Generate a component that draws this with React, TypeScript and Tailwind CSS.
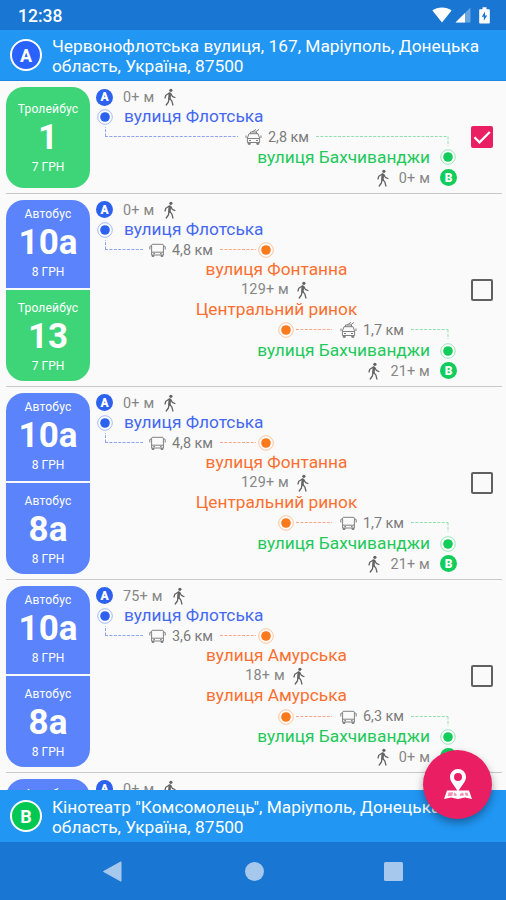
import React from 'react';
import clsx from 'clsx';

type Kind = 'bus' | 'trolley';
type Tone = 'blue' | 'orange' | 'green';

interface Leg {
  kind: Kind;
  number: string;
  price: string;
  distance: string;
}

interface Route {
  id: number;
  checked?: boolean;
  walkStart: string;
  walkEnd: string;
  from: string;
  to: string;
  transfer?: { from: string; walk: string; to: string };
  legs: Leg[];
}

const bus = (number: string, distance: string): Leg => ({ kind: 'bus', number, price: '8 ГРН', distance });
const trolley = (number: string, distance: string): Leg => ({ kind: 'trolley', number, price: '7 ГРН', distance });

const FROM = 'вулиця Флотська';
const TO = 'вулиця Бахчиванджи';

const routes: Route[] = [
  { id: 1, checked: true, walkStart: '0+ м', walkEnd: '0+ м', from: FROM, to: TO, legs: [trolley('1', '2,8 км')] },
  {
    id: 2, walkStart: '0+ м', walkEnd: '21+ м', from: FROM, to: TO,
    transfer: { from: 'вулиця Фонтанна', walk: '129+ м', to: 'Центральний ринок' },
    legs: [bus('10а', '4,8 км'), trolley('13', '1,7 км')],
  },
  {
    id: 3, walkStart: '0+ м', walkEnd: '21+ м', from: FROM, to: TO,
    transfer: { from: 'вулиця Фонтанна', walk: '129+ м', to: 'Центральний ринок' },
    legs: [bus('10а', '4,8 км'), bus('8а', '1,7 км')],
  },
  {
    id: 4, walkStart: '75+ м', walkEnd: '0+ м', from: FROM, to: TO,
    transfer: { from: 'вулиця Амурська', walk: '18+ м', to: 'вулиця Амурська' },
    legs: [bus('10а', '3,6 км'), bus('8а', '6,3 км')],
  },
  {
    id: 5, walkStart: '0+ м', walkEnd: '0+ м', from: FROM, to: TO,
    transfer: { from: 'вулиця Амурська', walk: '18+ м', to: 'вулиця Амурська' },
    legs: [bus('10а', '3,6 км'), bus('8а', '6,3 км')],
  },
];

const toneHex: Record<Tone, string> = { blue: '#2d62ee', orange: '#fb7a1c', green: '#12cc5c' };
const lineHex: Record<Tone, string> = { blue: '#8fa5f3', orange: '#fba88a', green: '#93dfb0' };

const StopDot = ({ tone }: { tone: Tone }) => (
  <svg className="w-[18px] h-[18px] shrink-0" viewBox="0 0 18 18">
    <circle cx="9" cy="9" r="7.3" fill="#fff" stroke={toneHex[tone]} strokeWidth="0.9" opacity="0.45" />
    <circle cx="9" cy="9" r="4.8" fill={toneHex[tone]} />
  </svg>
);

// Dashed connector, optionally turning up (at its start) or down (at its end)
const Dashes = ({ tone, turn, className }: { tone: Tone; turn?: 'up' | 'down'; className?: string }) => (
  <svg className={clsx('h-5 shrink-0 overflow-visible', className)} stroke={lineHex[tone]} strokeWidth="1" strokeDasharray="3 1.4">
    <line x1="0" y1="9.5" x2="100%" y2="9.5" />
    {turn === 'up' && <line x1="0.5" y1="9.5" x2="0.5" y2="0" />}
    {turn === 'down' && <line x1="100%" y1="9.5" x2="100%" y2="19" />}
  </svg>
);

const VehicleIcon = ({ kind }: { kind: Kind }) => (
  <svg className="w-[17px] h-[18px] shrink-0 -mr-px" viewBox="0 0 17 18" fill="none" stroke="#808080" strokeWidth="1">
    {kind === 'bus' ? (
      <>
        <path d="M3.2 3.3h10.6l.6 1v9.700H2.6V4.300zM2.600 11.200h11.800M.8 8.500V5.500l1.800-.8M16.200 8.500V5.500l-1.800-.8" />
        <path d="M4.300 12.600h1.700M11 12.600h1.700" />
        <path d="M3.100 14v1.500h1.800V14M12.100 14v1.500h1.800V14" fill="#808080" />
      </>
    ) : (
      <>
        <path d="M4 5.700h9l1.600 4.300v4.500H2.400V10zM2.600 10.500h11.800M1 7.500v2.500M16 7.500v2.500" />
        <path d="M5.500 5.700V4h6v1.700M7 4l4-2.600M10.500 4l3.500-2.600" />
        <path d="M4 12.500h2M11 12.500h2" />
        <path d="M3.200 14.600v1.700h2v-1.700M11.800 14.600v1.700h2v-1.700" fill="#808080" />
      </>
    )}
  </svg>
);

const Distance = ({ leg }: { leg: Leg }) => (
  <>
    <VehicleIcon kind={leg.kind} />
    <span className="ml-[7px] mr-[6px] mt-px w-[42px] text-[14.4px] text-[#7c7c7c]">{leg.distance}</span>
  </>
);

const Walk = () => (
  <svg className="w-[18px] h-[18px] shrink-0" viewBox="0 0 18 18" fill="none" stroke="#636363" strokeWidth="1.3" strokeLinecap="round" strokeLinejoin="round">
    <circle cx="9.900" cy="2.300" r="1.600" fill="#636363" stroke="none" />
    <path d="M8.800 5.500l-.4 5" strokeWidth="2.600" />
    <path d="M8 5.300L4.800 7.200 4 10M9.800 5.600l1.500 2.700 2.600 1.200" />
    <path d="M8.900 10.600l2 2.600 1 3.800M8 10.600l-.6 3.400-2.200 3" />
  </svg>
);

const Badge = ({ label }: { label: 'A' | 'B' }) => (
  <span
    className={clsx(
      'w-[17px] h-[17px] shrink-0 rounded-full flex items-center justify-center text-white text-[12px] leading-none font-black',
      label === 'A' ? 'bg-[#2d62ee]' : 'bg-[#12cc5c]'
    )}
  >
    {label}
  </span>
);

const Line = ({ className, children }: { className?: string; children: React.ReactNode }) => (
  <div className={clsx('h-[20.150px] flex items-center whitespace-nowrap', className)}>{children}</div>
);

const Stop = ({ children }: { children: React.ReactNode }) => (
  <span className="text-[17.3px]">{children}</span>
);

const Meters = ({ children }: { children: React.ReactNode }) => (
  <span className="text-[14.4px] tracking-[0.2px] text-[#868686]">{children}</span>
);

const LegCard = ({ leg }: { leg: Leg }) => (
  <div
    className={clsx(
      'flex-1 flex flex-col items-center justify-center text-white text-[12px] leading-[14px]',
      'only:pt-[2px] not-last:pb-px not-first:pt-[3px]',
      leg.kind === 'bus' ? 'bg-[#5b84fc]' : 'bg-[#3dd578]'
    )}
  >
    <span className="tracking-[0.2px]">{leg.kind === 'bus' ? 'Автобус' : 'Тролейбус'}</span>
    <span className="text-[35px] leading-[44px] font-bold">{leg.number}</span>
    <span>{leg.price}</span>
  </div>
);

const Checkbox = ({ checked }: { checked?: boolean }) => (
  <span
    className={clsx(
      'w-[22px] h-[22px] rounded-[2px] flex items-center justify-center',
      checked ? 'bg-[#e91e63]' : 'border-2 border-[#606060]'
    )}
  >
    {checked && (
      <svg className="w-[22px] h-[22px]" viewBox="0 0 22 22" fill="none" stroke="#fff" strokeWidth="2.3">
        <path d="M3.5 11.3l5 5L18.8 6" />
      </svg>
    )}
  </span>
);

const RouteRow = ({ route }: { route: Route }) => {
  const [first, second] = route.legs;
  return (
    <div className="ml-[6px] mr-[4px] pt-[6px] pb-[4.800px] flex shrink-0 border-b border-[#c8c8c8]">
      <div className="w-[84px] rounded-[18px] overflow-hidden flex flex-col gap-[2px]">
        {route.legs.map((leg, i) => (
          <LegCard key={i} leg={leg} />
        ))}
      </div>

      <div className="ml-[6px] w-[361px]">
        <Line>
          <Badge label="A" />
          <span className="ml-[10px] mr-[7px]"><Meters>{route.walkStart}</Meters></span>
          <Walk />
        </Line>
        <Line className="text-[#4468f2]">
          <StopDot tone="blue" />
          <span className="ml-[10px]"><Stop>{route.from}</Stop></span>
        </Line>
        {route.transfer && second ? (
          <>
            <Line className="pl-[9px]">
              <Dashes tone="blue" turn="up" className="w-[38px] mr-[6px]" />
              <Distance leg={first} />
              <Dashes tone="orange" className="w-[36px] mr-px" />
              <StopDot tone="orange" />
            </Line>
            <Line className="justify-center text-[#fb7030]"><Stop>{route.transfer.from}</Stop></Line>
            <Line className="justify-center gap-[5px]"><Meters>{route.transfer.walk}</Meters><Walk /></Line>
            <Line className="justify-center text-[#fb7030]"><Stop>{route.transfer.to}</Stop></Line>
            <Line className="justify-end pr-[9px]">
              <StopDot tone="orange" />
              <Dashes tone="orange" className="w-[36px] ml-px mr-[8px]" />
              <Distance leg={second} />
              <Dashes tone="green" turn="down" className="w-[37px]" />
            </Line>
          </>
        ) : (
          <Line className="px-[9px]">
            <Dashes tone="blue" turn="up" className="w-[133px] mr-[7px]" />
            <Distance leg={first} />
            <Dashes tone="green" turn="down" className="w-[132px]" />
          </Line>
        )}
        <Line className="justify-end text-[#22c95a]">
          <Stop>{route.to}</Stop>
          <span className="ml-[9px] flex"><StopDot tone="green" /></span>
        </Line>
        <Line className="justify-end">
          <Walk />
          <span className="ml-[7px] mr-[10px]"><Meters>{route.walkEnd}</Meters></span>
          <Badge label="B" />
        </Line>
      </div>

      <div className="ml-[14px] flex items-center">
        <Checkbox checked={route.checked} />
      </div>
    </div>
  );
};

const AddressBar = ({ label, lines, className }: { label: 'A' | 'B'; lines: string[]; className?: string }) => (
  <div className={clsx('shrink-0 bg-[#2196f3] flex items-center pl-[10px] text-white', className)}>
    <span
      className={clsx(
        'w-8 h-8 shrink-0 rounded-full border-[2.5px] border-white flex items-center justify-center text-[18px] font-bold',
        label === 'A' ? 'bg-[#2962ff]' : 'bg-[#00c853]'
      )}
    >
      {label}
    </span>
    <div className="ml-[10px] mt-px text-[17.3px] leading-5 whitespace-nowrap">
      {lines.map((line) => (
        <p key={line}>{line}</p>
      ))}
    </div>
  </div>
);

const StatusBar = () => (
  <div className="h-[30px] shrink-0 bg-[#1976d2] flex items-center pl-[18px] pr-[16px] text-white">
    <span className="text-[17.5px] font-medium mt-[2px]">12:38</span>
    <svg className="ml-auto w-[20px] h-[16px]" viewBox="0 0 20 16" fill="#fff">
      <path d="M10 15.5L.4 3.6C3 1.5 6.300 .4 10 .4s7 1.100 9.600 3.200z" />
    </svg>
    <svg className="ml-[3px] w-[16px] h-[16px]" viewBox="0 0 16 16" fill="#fff">
      <path d="M15.500.5v15H.5z" opacity="0.35" />
      <path d="M10 6v9.500H.5z" />
    </svg>
    <svg className="ml-[8px] w-[11px] h-[17px]" viewBox="0 0 11 17">
      <path d="M3.500.3h4v1.900H10a.8.8 0 0 1 .8.8v12.800a.8.8 0 0 1-.8.8H1a.8.8 0 0 1-.8-.8V3a.8.8 0 0 1 .8-.8h2.500z" fill="#fff" />
      <path d="M6 4.500L2.800 9.800h2v4L8.200 8.500H6z" fill="#1976d2" />
    </svg>
  </div>
);

const NavBar = () => (
  <div className="h-[58px] shrink-0 bg-[#1976d2] grid grid-cols-[84px_140.5px_140.5px_1fr] text-[#a6c8ed]">
    <span />
    <svg className="mt-[19px] ml-[19px] w-[20px] h-[21px]" viewBox="0 0 20 21" fill="currentColor">
      <path d="M18 .8v19.400L.5 10.500z" stroke="currentColor" strokeLinejoin="round" />
    </svg>
    <span className="mt-[20px] ml-[20px] w-[19px] h-[19px] rounded-full bg-[#a6c8ed]" />
    <span className="mt-[20px] ml-[19px] w-[19px] h-[19px] rounded-[1.5px] bg-[#a6c8ed]" />
  </div>
);

const MapButton = () => (
  <button className="absolute left-[423px] top-[750px] w-[69px] h-[69px] rounded-full bg-[#e91e63] shadow-[0_4px_8px_rgba(0,0,0,0.35)] flex items-center justify-center">
    <svg className="w-[30px] h-[32px] -mt-[2px]" viewBox="0 0 30 32">
      <path d="M4 22.500h22l3 8.500-7-1.500-7 1.500-7-1.500L1 31z" fill="#fff" />
      <path d="M5.500 24.500l4.500-.3-.8 3.500-4.700.6zM11.500 24.500l2.500 2-1 1.500-2.500-.8zM17 26l3-1.500 1 3-4 .6zM22 24.500l2.500.3 1 3.200-3-.6z" fill="#e91e63" opacity="0.5" />
      <path d="M15 1a8 8 0 0 0-8 8c0 5.500 6 9.500 8 15.500 2-6 8-10 8-15.500a8 8 0 0 0-8-8z" fill="#fff" />
      <circle cx="15" cy="9" r="4" fill="#e91e63" />
    </svg>
  </button>
);

const App: React.FC = () => {
  return (
    <div className="relative w-[506px] h-[900px] overflow-hidden flex flex-col bg-[#fafafa] font-['Roboto',sans-serif]">
      <StatusBar />
      <AddressBar
        label="A"
        className="h-[51px] border-b border-[#1c86e2]"
        lines={['Червонофлотська вулиця, 167, Маріуполь, Донецька', 'область, Україна, 87500']}
      />
      <div className="flex-1 min-h-0 overflow-hidden flex flex-col">
        {routes.map((route) => (
          <RouteRow key={route.id} route={route} />
        ))}
      </div>
      <AddressBar
        label="B"
        className="h-[52px]"
        lines={['Кінотеатр "Комсомолець", Маріуполь, Донецька', 'область, Україна, 87500']}
      />
      <NavBar />
      <MapButton />
    </div>
  );
};

export default App;
